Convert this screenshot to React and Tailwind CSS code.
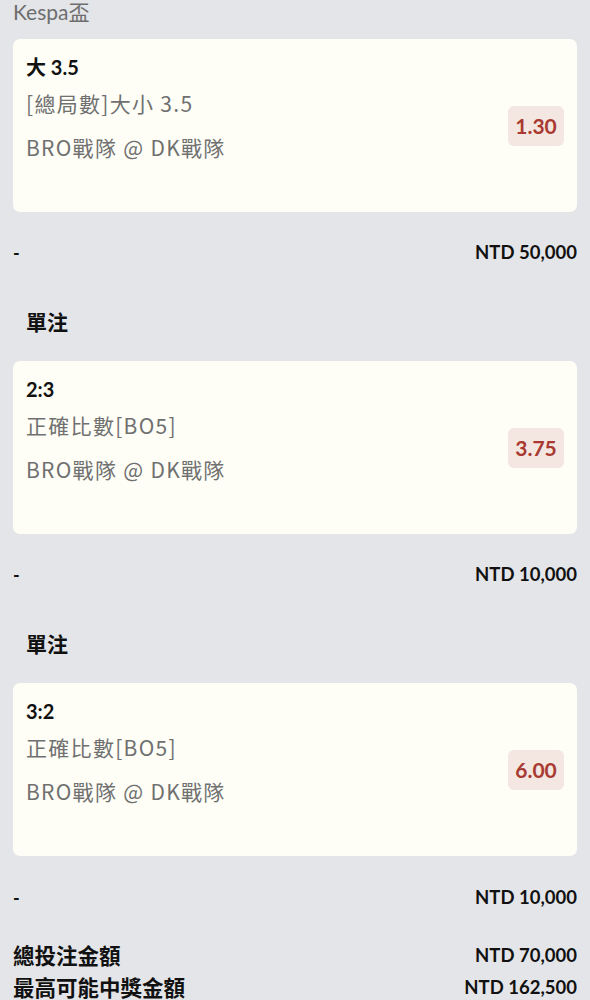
import React from "react";

const FONT = { fontFamily: 'Lato, "Noto Sans CJK TC", sans-serif' };
const GRAY = { fontFamily: '"Noto Sans CJK TC", "Noto Sans", sans-serif' };

function BetCard({ title, market, teams, odds }) {
  return (
    <div className="h-[173px] rounded-[7px] bg-[#fefef6] flex justify-between items-center pl-[13px] pr-[13px]">
      <div className="self-start pt-[16px]">
        <div className="text-[20px] leading-[24px] font-bold text-[#111]">{title}</div>
        <div style={GRAY} className="mt-[12px] text-[21px] leading-[24px] text-[#707070] tracking-[1.3px]">{market}</div>
        <div style={GRAY} className="mt-[20px] text-[21px] leading-[24px] text-[#707070] tracking-[1.3px]">{teams}</div>
      </div>
      <div className="w-[56px] h-[40px] rounded-[6px] bg-[#f4e6e0] flex items-center justify-center text-[21px] font-bold text-[#a83a31]">
        {odds}
      </div>
    </div>
  );
}

function AmountRow({ amount }) {
  return (
    <div className="flex justify-between items-center h-[24px] font-bold text-[#111]">
      <span className="text-[18px]">-</span>
      <span className="text-[18.5px]">{amount}</span>
    </div>
  );
}

export default function App() {
  return (
    <div style={FONT} className="min-h-screen bg-[#e4e5e8] px-[13px] overflow-hidden h-[1000px]">
      <div className="text-[21px] leading-[24px] text-[#6e6e6e]">Kespa盃</div>
      <div className="mt-[15px]">
        <BetCard title="大 3.5" market="[總局數]大小 3.5" teams="BRO戰隊 @ DK戰隊" odds="1.30" />
      </div>
      <div className="mt-[29px]">
        <AmountRow amount="NTD 50,000" />
      </div>
      <div className="mt-[45px] pl-[13px] text-[21px] leading-[24px] font-bold text-[#111]">單注</div>
      <div className="mt-[27px]">
        <BetCard title="2:3" market="正確比數[BO5]" teams="BRO戰隊 @ DK戰隊" odds="3.75" />
      </div>
      <div className="mt-[29px]">
        <AmountRow amount="NTD 10,000" />
      </div>
      <div className="mt-[45px] pl-[13px] text-[21px] leading-[24px] font-bold text-[#111]">單注</div>
      <div className="mt-[27px]">
        <BetCard title="3:2" market="正確比數[BO5]" teams="BRO戰隊 @ DK戰隊" odds="6.00" />
      </div>
      <div className="mt-[30px]">
        <AmountRow amount="NTD 10,000" />
      </div>
      <div className="mt-[34px] flex flex-col gap-[8px]">
        <div className="flex justify-between items-center h-[24px] text-[#111] font-bold">
          <span className="text-[21.5px]">總投注金額</span>
          <span className="text-[18.5px]">NTD 70,000</span>
        </div>
        <div className="flex justify-between items-center h-[24px] text-[#111] font-bold">
          <span className="text-[21.5px]">最高可能中獎金額</span>
          <span className="text-[18.5px]">NTD 162,500</span>
        </div>
      </div>
    </div>
  );
}
